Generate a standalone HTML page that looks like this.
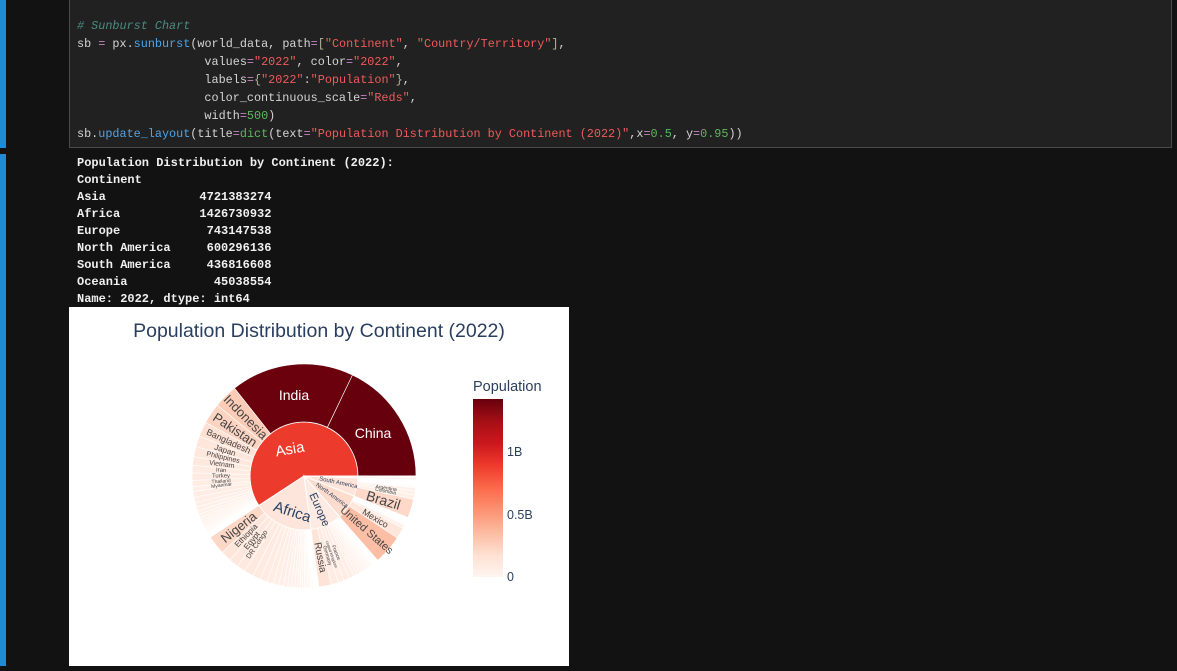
<!DOCTYPE html>
<html><head><meta charset="utf-8"><style>
body{margin:0;width:1177px;height:666px;background:#121212;overflow:hidden;position:relative;font-family:"Liberation Sans",sans-serif}
.bar{position:absolute;left:0;width:6px;background:#1f8ad6}
.cell{position:absolute;left:69px;top:0;width:1101px;height:147px;background:#212121;border:1px solid #4a4a4a;border-top:none}
pre{margin:0;font-family:"Liberation Mono",monospace}
.code{position:absolute;left:77px;top:17px;font-size:11.8px;line-height:18px;color:#d4d4d4}
.c{color:#4a8c7f;font-style:italic}.o{color:#c586c0}.f{color:#4fa3e8}.s{color:#f05a5a}.n{color:#5cb85c}.g{color:#b5b09a}
.out{position:absolute;left:77px;top:155px;font-size:12px;line-height:17px;color:#f0f0f0;font-weight:bold}
.plot{position:absolute;left:69px;top:307px;width:500px;height:359px;background:#fff}
</style></head><body>
<div class="bar" style="top:0;height:148px"></div>
<div class="bar" style="top:154px;height:512px"></div>
<div class="cell"></div>
<pre class="code"><span class="c"># Sunburst Chart</span>
sb <span class="o">=</span> px.<span class="f">sunburst</span>(world_data, path<span class="o">=</span><span class="g">[</span><span class="s">"Continent"</span>, <span class="s">"Country/Territory"</span><span class="g">]</span>,
                  values<span class="o">=</span><span class="s">"2022"</span>, color<span class="o">=</span><span class="s">"2022"</span>,
                  labels<span class="o">=</span><span class="g">{</span><span class="s">"2022"</span>:<span class="s">"Population"</span><span class="g">}</span>,
                  color_continuous_scale<span class="o">=</span><span class="s">"Reds"</span>,
                  width<span class="o">=</span><span class="n">500</span>)
sb.<span class="f">update_layout</span>(title<span class="o">=</span><span class="n">dict</span>(text<span class="o">=</span><span class="s">"Population Distribution by Continent (2022)"</span>,x<span class="o">=</span><span class="n">0.5</span>, y<span class="o">=</span><span class="n">0.95</span>))</pre>
<pre class="out">Population Distribution by Continent (2022):
Continent
Asia             4721383274
Africa           1426730932
Europe            743147538
North America     600296136
South America     436816608
Oceania            45038554
Name: 2022, dtype: int64</pre>
<div class="plot">
<svg width="500" height="359" xmlns="http://www.w3.org/2000/svg" font-family="Liberation Sans, sans-serif">
<defs><linearGradient id="cb" x1="0" y1="1" x2="0" y2="0">
<stop offset="0" stop-color="#fff5f0"/><stop offset="0.125" stop-color="#fee0d2"/><stop offset="0.25" stop-color="#fcbba1"/><stop offset="0.375" stop-color="#fc9272"/><stop offset="0.5" stop-color="#fb6a4a"/><stop offset="0.625" stop-color="#ef3b2c"/><stop offset="0.75" stop-color="#cb181d"/><stop offset="0.875" stop-color="#a50f15"/><stop offset="1" stop-color="#67000d"/></linearGradient></defs>
<text x="250" y="30" text-anchor="middle" font-size="19.5" fill="#2a3f5f">Population Distribution by Continent (2022)</text>
<g id="sb"></g>
<text x="404" y="84" font-size="14.5" fill="#2a3f5f">Population</text>
<rect x="404" y="92" width="30" height="178" fill="url(#cb)"/>
<text x="438" y="149" font-size="12.5" fill="#2a3f5f">1B</text>
<text x="438" y="212" font-size="12.5" fill="#2a3f5f">0.5B</text>
<text x="438" y="274" font-size="12.5" fill="#2a3f5f">0</text>
</svg></div>
<script>
(function(){
var cx=235,cy=169,r0=54,r1=112;
var stops=["#fff5f0","#fee0d2","#fcbba1","#fc9272","#fb6a4a","#ef3b2c","#cb181d","#a50f15","#67000d"];
function h2r(h){return[1,3,5].map(function(i){return parseInt(h.substr(i,2),16)})}
function col(t){t=Math.max(0,Math.min(1,t));var p=t*8,i=Math.min(7,Math.floor(p)),f=p-i,a=h2r(stops[i]),b=h2r(stops[i+1]);
return"rgb("+a.map(function(v,k){return Math.round(v+(b[k]-v)*f)}).join(",")+")"}
function pt(r,a){a=a*Math.PI/180;return(cx+r*Math.cos(a)).toFixed(2)+","+(cy-r*Math.sin(a)).toFixed(2)}
function arc(ri,ro,a0,a1){var l=(a1-a0)>180?1:0;
if(ri==0){return "M"+cx+","+cy+" L"+pt(ro,a0)+" A"+ro+","+ro+" 0 "+l+" 0 "+pt(ro,a1)+"Z"}
return "M"+pt(ri,a0)+" L"+pt(ro,a0)+" A"+ro+","+ro+" 0 "+l+" 0 "+pt(ro,a1)+" L"+pt(ri,a1)+" A"+ri+","+ri+" 0 "+l+" 1 "+pt(ri,a0)+"Z"}
var MAX=1425.9,TOT=7972.9;
function rest(total,n){var a=[],s=0;for(var i=0;i<n;i++){var v=Math.pow(0.88,i);a.push(v);s+=v}return a.map(function(v){return v/s*total})}
var data=[
 ["Asia",4721.4,0.64,[["China",1425.9],["India",1417.2],["Indonesia",275.5],["Pakistan",235.8],["Bangladesh",171.2],["Japan",123.9],["Philippines",115.6],["Vietnam",98.2],["Iran",88.6],["Turkey",85.3],["Thailand",71.7],["Myanmar",54.2]],"#ec3a2c"],
 ["Africa",1426.7,0.1,[["Nigeria",218.5],["Ethiopia",123.4],["Egypt",110.99],["DR Congo",99]],"#fde5db"],
 ["Europe",743.1,0.07,[["Russia",144.7],["Germany",83.4],["United Kingdom",67.5],["France",64.6],["Italy",59]],"#fdeae2"],
 ["North America",600.3,0.13,[["United States",338.3],["Mexico",127.5],["Canada",38.5]],"#fddccd"],
 ["South America",436.8,0.09,[["Brazil",215.3],["Colombia",51.9],["Argentina",45.5],["Peru",34]],"#fee4d9"],
 ["Oceania",45,0.02,[["Australia",26],["Papua New Guinea",10]],"#fff0ea"]];
var g=document.getElementById("sb"),out="",txt="",a=0;
data.forEach(function(c){var span=c[1]/TOT*360,a0=a,a1=a+span,b=a0,sum=0;
 out+='<path d="'+arc(0,r0,a0,a1)+'" fill="'+c[4]+'" stroke="#fff" stroke-width="1"/>';
 c[3].forEach(function(k){sum+=k[1]});
 var kids=c[3].map(function(k){return[k[0],k[1]]});
 var n=c[0]=="Asia"?30:(c[0]=="Oceania"?8:40);
 rest(c[1]-sum,n).forEach(function(v){kids.push(["",v])});
 kids.forEach(function(k){var s=k[1]/TOT*360;
  out+='<path d="'+arc(r0,r1,b,b+s)+'" fill="'+col(k[1]/MAX)+'" stroke="#fff" stroke-width="0.6"/>';
  k.push(b+s/2);b+=s});
 c.push(kids);a=a1});
function lab(t,r,ang,size,color,rot){var p=pt(r,ang).split(",");
 txt+='<text x="'+p[0]+'" y="'+p[1]+'" font-size="'+size+'" fill="'+color+'" text-anchor="middle" dominant-baseline="central" transform="rotate('+rot+' '+p[0]+' '+p[1]+')">'+t+'</text>'}
function radial(t,ang,size){var rot=(ang>90&&ang<270)?-(ang+180):-ang;lab(t,83,ang,size,"#444",rot)}
var kids={};data.forEach(function(c){c[5].forEach(function(k){if(k[0])kids[k[0]]=k[2]})});
txt+='<text x="225" y="93" font-size="14" fill="#fff" text-anchor="middle">India</text>';
txt+='<text x="304" y="131" font-size="14" fill="#fff" text-anchor="middle">China</text>';
[["Indonesia",13],["Pakistan",13],["Bangladesh",9],["Japan",8],["Philippines",7],["Vietnam",7],["Iran",6],["Turkey",6],["Thailand",5],["Myanmar",5],["Nigeria",13],["Ethiopia",8],["Egypt",8],["DR Congo",7],["Russia",10],["Germany",5],["United Kingdom",4],["France",5],["United States",11],["Mexico",9],["Brazil",14],["Colombia",5],["Argentina",5]].forEach(function(x){radial(x[0],kids[x[0]],x[1])});
lab("Asia",30,118,15,"#fff",-10);
lab("Africa",38,252,15,"#2a3f5f",18);
lab("Europe",37,294,11,"#2a3f5f",66);
lab("North America",34,324,6,"#2a3f5f",36);
lab("South America",35,348,6,"#2a3f5f",12);
g.innerHTML=out+txt;
})();
</script>
</body></html>
